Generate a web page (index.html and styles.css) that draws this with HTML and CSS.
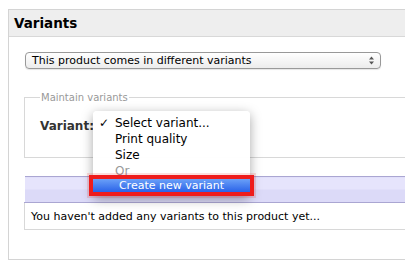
FILE: index.html
```html
<!DOCTYPE html>
<html lang="en">

<head>
  <meta charset="UTF-8">
  <title>Variants</title>
  <link rel="stylesheet" href="styles.css">
</head>

<body>
  <div class="panel">
    <h2 class="panel-title">Variants</h2>

    <div class="panel-body">
      <div class="select-box">
        <span>This product comes in different variants</span>
        <svg class="arrows" width="5" height="9" viewBox="0 0 5 9">
          <path d="M0 3.5 L2.5 0.5 L5 3.5 Z M0 5.5 L2.5 8.5 L5 5.5 Z" fill="#555" />
        </svg>
      </div>

      <fieldset class="maintain">
        <legend>Maintain variants</legend>
        <label class="variant-label">Variant:</label>
      </fieldset>

      <table class="variant-table">
        <tr class="head-row">
          <th></th>
        </tr>
        <tr>
          <td>You haven't added any variants to this product yet...</td>
        </tr>
      </table>
    </div>

    <ul class="menu">
      <li><span class="check">&#10003;</span>Select variant...</li>
      <li>Print quality</li>
      <li>Size</li>
      <li class="disabled">Or</li>
      <li class="selected">Create new variant</li>
    </ul>
  </div>
</body>

</html>
```

FILE: styles.css
```css
body {
  font-family: "DejaVu Sans", Verdana, sans-serif;
  margin: 0;
  padding: 9px 0 0 8px;
  background-color: white;
  color: #000;
  overflow: hidden;
}

.panel {
  position: relative;
  width: 420px;
  height: 249px;
  border: 1px solid #d4d4d4;
  border-right: none;
}

.panel-title {
  margin: 0;
  height: 26px;
  padding-left: 5px;
  font-size: 13.5px;
  line-height: 26px;
  background-color: #eeeeee;
  border-bottom: 1px solid #d8d8d8;
}

.panel-body {
  padding: 15px 0 0 15px;
}

.select-box {
  display: flex;
  justify-content: space-between;
  align-items: center;
  width: 342px;
  height: 15px;
  margin-left: 1px;
  padding: 0 6px 0 6px;
  font-size: 11px;
  border: 1px solid #999;
  border-radius: 4px;
  background: linear-gradient(#ffffff, #ececec);
  box-shadow: 0 1px 1px rgba(0, 0, 0, 0.1);
}

.maintain {
  margin: 23px 0 0 0;
  padding: 0 0 0 15px;
  height: 64px;
  border: 1px solid #d8d8d8;
  border-right: none;
}

.maintain legend {
  padding: 0 1px;
  margin-left: 0;
  font-size: 10px;
  color: #999;
}

.variant-label {
  display: block;
  margin-top: 16px;
  font-size: 12px;
  font-weight: bold;
  color: #333;
}

.variant-table {
  margin-top: 18px;
  width: 400px;
  border-collapse: collapse;
  font-size: 11px;
}

.head-row th {
  height: 25px;
  padding: 0;
  border-top: 1px solid #aaa6d2;
  border-bottom: 1px solid #aaa6d2;
  background: linear-gradient(#e6e4fc 50%, #dcdaf8 50%);
}

.variant-table td {
  height: 26px;
  padding: 0 0 0 6px;
  border-left: 1px solid #d8d8d8;
  border-bottom: 1px solid #d8d8d8;
}

.menu {
  position: absolute;
  left: 84px;
  top: 101px;
  width: 157px;
  margin: 0;
  padding: 4px 0 4px 0;
  list-style: none;
  font-size: 12px;
  background-color: rgba(255, 255, 255, 0.97);
  border-radius: 4px;
  box-shadow: 0 3px 12px rgba(0, 0, 0, 0.35);
}

.menu li {
  height: 16px;
  line-height: 16px;
  padding-left: 22px;
  position: relative;
}

.menu .check {
  position: absolute;
  left: 6px;
  font-weight: bold;
}

.menu .disabled {
  color: #999;
  height: 14px;
}

.menu .selected {
  margin-top: 2px;
  padding-left: 0;
  text-align: center;
  color: white;
  font-size: 11px;
  height: 13px;
  line-height: 13px;
  background: linear-gradient(#6aa0f8, #2a62e8);
  outline: 4px solid #ee1c1c;
  outline-offset: 0;
  box-shadow: 0 0 0 6px rgba(238, 28, 28, 0.15);
}
```
